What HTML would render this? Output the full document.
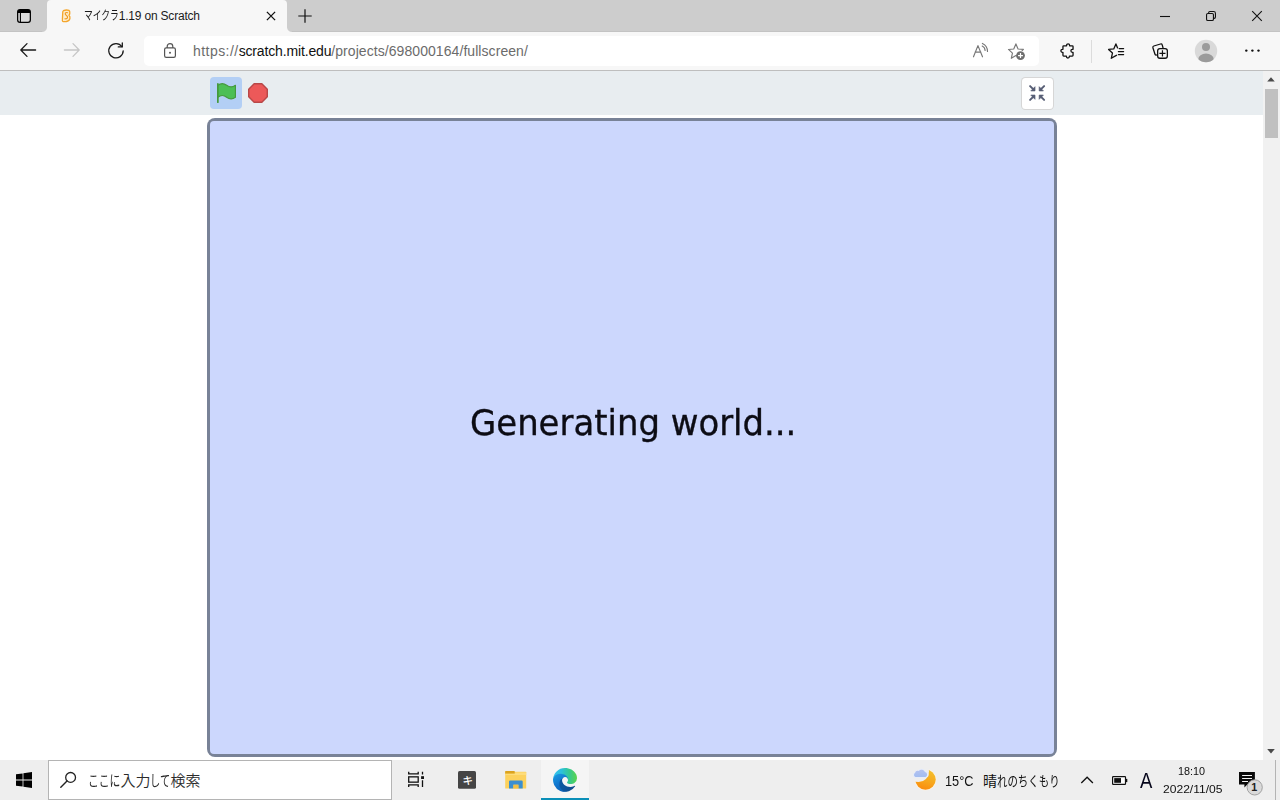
<!DOCTYPE html>
<html lang="ja">
<head>
<meta charset="utf-8">
<title>マイクラ1.19 on Scratch</title>
<style>
*{box-sizing:border-box;margin:0;padding:0}
html,body{width:1280px;height:800px;overflow:hidden;background:#fff}
body{position:relative;font-family:"Liberation Sans","Noto Sans CJK JP",sans-serif;color:#111}
.abs{position:absolute}
svg{position:absolute;overflow:visible}
/* ---------- browser frame ---------- */
#tabbar{position:absolute;left:0;top:0;width:1280px;height:32px;background:#cdcdcd;border-bottom:1px solid #c3c3c3}
#tab{position:absolute;left:47px;top:0;width:240px;height:32px;background:#f7f7f7;border-radius:4px 4px 0 0}
#tab:before,#tab:after{content:"";position:absolute;bottom:0;width:5px;height:5px;background:radial-gradient(circle at 0 0,#cdcdcd 4.5px,#f7f7f7 5.5px)}
#tab:before{left:-5px}
#tab:after{right:-5px;background:radial-gradient(circle at 100% 0,#cdcdcd 4.5px,#f7f7f7 5.5px)}
#tabtitle{position:absolute;left:84px;top:8px;font-size:12px;line-height:16px;white-space:nowrap;color:#1b1b1b;transform-origin:0 50%}
#toolbar{position:absolute;left:0;top:32px;width:1280px;height:38px;background:#f7f7f7}
#tbline{position:absolute;left:0;top:70px;width:1280px;height:1px;background:#bebebe}
#addr{position:absolute;left:144px;top:36px;width:895px;height:30px;background:#fff;border-radius:5px}
#url{position:absolute;left:193px;top:42px;font-size:14px;line-height:18px;white-space:nowrap;color:#6b6b6b;transform-origin:0 50%}
#url b{font-weight:normal;color:#111;letter-spacing:-.15px}
#u1{letter-spacing:.45px}
#u3{letter-spacing:.065px}
/* ---------- page ---------- */
#hdr{position:absolute;left:0;top:71px;width:1263px;height:44px;background:#e8edf0}
#flag{position:absolute;left:210px;top:77px;width:32px;height:32px;border-radius:4px;background:#b3cff5}
#unfs{position:absolute;left:1020.5px;top:76.5px;width:33px;height:33px;border-radius:4.5px;background:#fff;border:1px solid rgba(0,0,0,.16)}
#stage{position:absolute;left:207px;top:118px;width:850px;height:639px;border-radius:8px;background:#788297}
#stage i{position:absolute;left:3px;top:3px;right:3px;bottom:3px;border-radius:4px;background:#ccd7fd}
#gen{position:absolute;left:470px;top:398px;font-family:"DejaVu Sans","Liberation Sans",sans-serif;font-size:35.5px;line-height:50px;white-space:nowrap;color:#0c0c14;transform-origin:0 50%;transform:scaleX(.955);-webkit-text-stroke:.35px #0c0c14}
#sb{position:absolute;left:1263px;top:71px;width:17px;height:689px;background:#f1f1f1}
#thumb{position:absolute;left:1265px;top:89px;width:13px;height:49px;background:#c0c0c0}
/* ---------- taskbar ---------- */
#task{position:absolute;left:0;top:760px;width:1280px;height:40px;background:#eeeeee}
#search{position:absolute;left:48px;top:760px;width:344px;height:40px;background:#fff;border:1px solid #b4b4b4}
#stext .k{font-weight:400}
#stext{position:absolute;left:88px;font-weight:350;top:770px;font-size:15px;line-height:20px;white-space:nowrap;color:#2b2b2b;transform-origin:0 50%;font-family:"Noto Sans CJK JP","Liberation Sans",sans-serif}
#edgebg{position:absolute;left:541px;top:760px;width:48px;height:40px;background:#f5f5f5}
#edgeul{position:absolute;left:541px;top:798px;width:48px;height:2px;background:#0b8fb8}
.k{display:inline-block;transform-origin:0 50%}
.tt{position:absolute;white-space:nowrap;color:#111;transform-origin:0 50%}
</style>
</head>
<body>
<!-- browser chrome -->
<div id="tabbar"></div>
<div id="tab"></div>
<div id="tabtitle"><span class="k" style="transform:scaleX(.73);margin-right:-13px">マイクラ</span><span style="letter-spacing:-.2px">1.19 on Scratch</span></div>
<div id="toolbar"></div>
<div id="tbline"></div>
<div id="addr"></div>
<div id="url"><span id="u1">https://</span><b id="u2">scratch.mit.edu</b><span id="u3">/projects/698000164/fullscreen/</span></div>


<!-- tab actions icon -->
<svg style="left:17px;top:9px" width="14" height="14" viewBox="0 0 14 14"><rect x=".65" y=".65" width="12.7" height="12.7" rx="2.4" fill="#dbdbdb" stroke="#000" stroke-width="1.25"/><path d="M.65 3Q.65 .65 3 .65H11Q13.35 .65 13.35 3V3.9H.65Z" fill="#000"/><path d="M3.4 3.5V13" stroke="#000" stroke-width="1.1"/></svg>
<!-- favicon (Scratch S) -->
<svg style="left:61px;top:9px" width="11" height="14" viewBox="0 0 11 14"><path d="M2.4 1.7Q5.4 .5 7.9 1.4Q9 2.1 8.8 4.1Q8.7 5.5 8 6.3Q9.3 7.5 8.9 9.6Q8.4 12 5.4 12.5Q3.2 12.8 1.7 12.3Q1.2 11.8 1.4 10.4L1.8 2.8Q1.9 2 2.4 1.7Z" fill="#fdeccb" stroke="#f4a52a" stroke-width="1.3" stroke-linejoin="round"/><path d="M6.6 3.7Q5 3.1 4.3 4.1Q3.9 5.3 5.2 6.2Q6.9 7.2 6.5 8.8Q5.9 10.3 3.9 9.8" fill="none" stroke="#ee9a22" stroke-width="1.15" stroke-linecap="round"/></svg>
<!-- tab close -->
<svg style="left:265.7px;top:11.3px" width="10" height="10" viewBox="0 0 10 10"><path d="M.9 .9L9.1 9.1M9.1 .9L.9 9.1" stroke="#111" stroke-width="1.3" fill="none"/></svg>
<!-- new tab -->
<svg style="left:297.5px;top:8.5px" width="14" height="14" viewBox="0 0 14 14"><path d="M7 .3V13.7M.3 7H13.7" stroke="#111" stroke-width="1.2" fill="none"/></svg>
<!-- window controls -->
<svg style="left:1160px;top:11px" width="10" height="10" viewBox="0 0 10 10"><path d="M0 5.5H10" stroke="#111" stroke-width="1.1"/></svg>
<svg style="left:1206px;top:11px" width="10" height="10" viewBox="0 0 10 10"><rect x=".55" y="2.55" width="6.9" height="6.9" rx="1.3" fill="none" stroke="#111" stroke-width="1.1"/><path d="M2.6 2.4 V1.9 Q2.6 .55 3.9 .55 H7.6 Q9.45 .55 9.45 2.4 V6.1 Q9.45 7.4 8.1 7.4 H7.6" fill="none" stroke="#111" stroke-width="1.1"/></svg>
<svg style="left:1252px;top:11px" width="10" height="10" viewBox="0 0 10 10"><path d="M.2 .2L9.8 9.8M9.8 .2L.2 9.8" stroke="#111" stroke-width="1.1" fill="none"/></svg>
<!-- back / forward / reload -->
<svg style="left:20px;top:43px" width="16" height="14" viewBox="0 0 16 14"><path d="M7 .6L.8 7L7 13.4M.8 7H15.6" stroke="#1a1a1a" stroke-width="1.3" fill="none" stroke-linecap="round" stroke-linejoin="round"/></svg>
<svg style="left:64px;top:43px" width="16" height="14" viewBox="0 0 16 14"><path d="M9 .6L15.2 7L9 13.4M15.2 7H.4" stroke="#c6c6c6" stroke-width="1.3" fill="none" stroke-linecap="round" stroke-linejoin="round"/></svg>
<svg style="left:108px;top:42px" width="16" height="17" viewBox="0 0 16 17"><path d="M13.9 4.6A7.2 7.2 0 1 0 15.2 8.8" stroke="#1a1a1a" stroke-width="1.3" fill="none" stroke-linecap="round"/><path d="M14.3 .9V4.9H10.3" stroke="#1a1a1a" stroke-width="1.3" fill="none" stroke-linecap="round" stroke-linejoin="round"/></svg>
<!-- lock -->
<svg style="left:164px;top:43px" width="12" height="15" viewBox="0 0 12 15"><rect x=".6" y="4.9" width="10.8" height="9.5" rx="1.6" fill="none" stroke="#555" stroke-width="1.2"/><path d="M3.2 4.9V3.4a2.8 2.8 0 0 1 5.6 0V4.9" fill="none" stroke="#555" stroke-width="1.2"/><circle cx="6" cy="9.7" r="1" fill="#555"/></svg>
<!-- read aloud -->
<svg style="left:973px;top:43px" width="16" height="15" viewBox="0 0 16 15"><path d="M.5 13.8L4.95 2.6L9.5 13.8M2 9.1H7.9" stroke="#777" stroke-width="1.15" fill="none" stroke-linecap="round" stroke-linejoin="round"/><path d="M9.2 3A5.2 5.2 0 0 1 12.1 7.5M9.4 .4A8.8 8.8 0 0 1 14.5 8.5" stroke="#777" stroke-width="1.15" fill="none" stroke-linecap="round"/></svg>
<!-- add favourite -->
<svg style="left:1008px;top:43px" width="17" height="17" viewBox="0 0 17 17"><path d="M8.4 12.9L7.9 12.6L3.3 15.3L4.45 10.05L.5 6.45L5.75 5.95L7.9 .9L10.05 5.95L15.4 6.4L14.2 7.5" stroke="#787878" stroke-width="1.15" fill="none" stroke-linejoin="round" stroke-linecap="round"/><circle cx="12.5" cy="12.55" r="4.4" fill="#6f6f6f"/><path d="M12.5 10.1V15M10.05 12.55H14.95" stroke="#fff" stroke-width="1.2"/></svg>
<!-- extensions puzzle -->
<svg style="left:1060px;top:43px" width="15" height="16" viewBox="0 0 15 16"><path d="M3.7 2.8H6.6V2.3A1.5 1.5 0 0 1 9.6 2.3V2.8H12.3Q13.05 2.8 13.05 3.55V6.3H12.4A1.5 1.5 0 0 0 12.4 9.3H13.05V12.3Q13.05 13.05 12.3 13.05H9.4V13.5A1.5 1.5 0 0 1 6.4 13.5V13.05H3.7Q2.95 13.05 2.95 12.3V9.3H2.4A1.5 1.5 0 0 1 2.4 6.3H2.95V3.55Q2.95 2.8 3.7 2.8Z" stroke="#111" stroke-width="1.3" fill="none" stroke-linejoin="round"/></svg>
<div class="abs" style="left:1091px;top:40px;width:1px;height:23px;background:#dcdcdc"></div>
<!-- favourites -->
<svg style="left:1108px;top:43px" width="17" height="16" viewBox="0 0 17 16"><path d="M8.6 12.2L7.9 12.6L3.3 15.3L4.45 10.05L.6 6.45L5.75 5.95L7.9 .9L9.6 4.9" stroke="#111" stroke-width="1.3" fill="none" stroke-linejoin="round" stroke-linecap="round"/><path d="M11.2 5.5H15.6M10.4 8.5H15.6M10.4 11.5H15.6" stroke="#111" stroke-width="1.25" stroke-linecap="round"/></svg>
<!-- collections -->
<svg style="left:1152px;top:43px" width="17" height="16" viewBox="0 0 17 16"><path d="M4.7 12Q3.4 12.4 3 11.2L.9 4.7Q.5 3.4 1.8 3L8.5 1Q9.8 .6 10.2 1.9L11 4.7" stroke="#111" stroke-width="1.3" fill="none" stroke-linecap="round"/><rect x="5.65" y="5.55" width="9.7" height="9.7" rx="2.3" fill="none" stroke="#111" stroke-width="1.3"/><path d="M10.45 7.3V13.5M7.4 10.4H13.5" stroke="#111" stroke-width="1.2"/></svg>
<!-- profile -->
<svg style="left:1194px;top:39px" width="24" height="24" viewBox="0 0 24 24"><defs><clipPath id="pc"><circle cx="12" cy="12" r="11.2"/></clipPath></defs><circle cx="12" cy="12" r="11.2" fill="#d9d9d9"/><g clip-path="url(#pc)" fill="#9b9b9b"><circle cx="12" cy="8" r="4"/><ellipse cx="12" cy="20.2" rx="7.7" ry="5.6"/></g></svg>
<!-- menu dots -->
<svg style="left:1244px;top:48px" width="17" height="5" viewBox="0 0 17 5"><circle cx="2.3" cy="2.6" r="1.2" fill="#111"/><circle cx="8.4" cy="2.6" r="1.2" fill="#111"/><circle cx="14.5" cy="2.6" r="1.2" fill="#111"/></svg>

<!-- page -->
<div id="hdr"></div>
<div id="flag"></div>
<div id="unfs"></div>
<div id="stage"><i></i></div>
<div id="gen">Generating world...</div>
<div id="sb"></div>
<div id="thumb"></div>


<!-- green flag -->
<svg style="left:216.5px;top:83px" width="19" height="20" viewBox="0 0 16.63 17.5"><path d="M.75,2A6.44,6.44,0,0,1,8.44,2h0a6.44,6.44,0,0,0,7.69,0V12.4a6.44,6.44,0,0,1-7.69,0h0a6.44,6.44,0,0,0-7.69,0" fill="#4cbf56" stroke="#45993d" stroke-linecap="round" stroke-linejoin="round"/><path d="M.75 16.75V.75" stroke="#45993d" stroke-width="1.5" stroke-linecap="round" fill="none"/></svg>
<!-- stop -->
<svg style="left:248px;top:83px" width="20" height="20" viewBox="0 0 14 14"><polygon points="4.3 .5 9.7 .5 13.5 4.3 13.5 9.7 9.7 13.5 4.3 13.5 .5 9.7 .5 4.3" fill="#ec5959" stroke="#b84848" stroke-linecap="round" stroke-linejoin="round"/></svg>
<!-- unfullscreen arrows -->
<svg style="left:1029px;top:85px" width="16" height="16" viewBox="0 0 16 16"><g fill="#575e75" stroke="#575e75"><g><path d="M6 1.7V5.9H1.8Z" stroke-width=".7" stroke-linejoin="round"/><path d="M1.1 1.1L4.4 4.4" stroke-width="2" stroke-linecap="round"/></g><g transform="translate(16.2,0) scale(-1,1)"><path d="M6 1.7V5.9H1.8Z" stroke-width=".7" stroke-linejoin="round"/><path d="M1.1 1.1L4.4 4.4" stroke-width="2" stroke-linecap="round"/></g><g transform="translate(0,16) scale(1,-1)"><path d="M6 1.7V5.9H1.8Z" stroke-width=".7" stroke-linejoin="round"/><path d="M1.1 1.1L4.4 4.4" stroke-width="2" stroke-linecap="round"/></g><g transform="translate(16.2,16) scale(-1,-1)"><path d="M6 1.7V5.9H1.8Z" stroke-width=".7" stroke-linejoin="round"/><path d="M1.1 1.1L4.4 4.4" stroke-width="2" stroke-linecap="round"/></g></g></svg>
<!-- scrollbar arrows -->
<svg style="left:1267.4px;top:77.4px" width="8" height="4.6" viewBox="0 0 8 4.6"><path d="M4 .2L7.8 4.5H.2Z" fill="#4a4a4a"/></svg>
<svg style="left:1267.4px;top:748.6px" width="8" height="4.6" viewBox="0 0 8 4.6"><path d="M4 4.4L7.8 .1H.2Z" fill="#4a4a4a"/></svg>

<!-- taskbar -->
<div id="task"></div>
<div id="search"></div>
<div id="stext"><span class="k" style="transform:scaleX(.72);margin-right:-12.6px">ここに</span>入力<span class="k" style="transform:scaleX(.68);margin-right:-9.6px">して</span>検索</div>
<div id="edgebg"></div>
<div id="edgeul"></div>

<!-- start -->
<svg style="left:16px;top:772px" width="16" height="16" viewBox="0 0 16 16"><path d="M0 2.3L6.6 1.4V7.6H0ZM7.4 1.3L16 0V7.6H7.4ZM0 8.4H6.6V14.6L0 13.7ZM7.4 8.4H16V16L7.4 14.7Z" fill="#000"/></svg>
<!-- search glass -->
<svg style="left:60px;top:771px" width="17" height="17" viewBox="0 0 17 17"><circle cx="10.6" cy="6.4" r="4.9" fill="none" stroke="#222" stroke-width="1.3"/><path d="M7 10L.8 16.2" stroke="#222" stroke-width="1.4" stroke-linecap="round"/></svg>
<!-- task view -->
<svg style="left:407px;top:771px" width="18" height="17" viewBox="0 0 18 17"><g fill="none" stroke="#111" stroke-width="1.3"><path d="M1.7 .8V2.9H11.2V.8"/><rect x="1.7" y="5.85" width="9.5" height="5.3"/><path d="M1.7 16.1V13.8H11.2V16.1"/><path d="M15.5 .8V3.4M15.5 9.3V16.1"/></g><rect x="14.1" y="5.2" width="2.9" height="2.8" fill="#111"/></svg>
<!-- kana app icon -->
<svg style="left:458px;top:771px" width="18" height="18" viewBox="0 0 18 18"><rect width="18" height="17.8" rx="1.6" fill="#454545"/><text x="9.7" y="12.6" font-family="'Noto Sans CJK JP',sans-serif" font-size="10.5" font-weight="500" fill="#fff" text-anchor="middle">キ</text></svg>
<!-- explorer -->
<svg style="left:505px;top:771px" width="22" height="18" viewBox="0 0 22 18"><rect x=".2" y=".8" width="21" height="16.8" rx=".5" fill="#fcd15c"/><path d="M.2 .5Q.2 0 .7 0H9.2Q9.7 0 9.7 .5V2.7H.2Z" fill="#dba31f"/><path d="M.2 2.7H9.7L10.6 1.6H21.2V4H.2Z" fill="#fddc7a"/><path d="M4 17.6V10.6Q4 9.4 5.2 9.4H16.5Q17.7 9.4 17.7 10.6V17.6H13.4V13.7H8.4V17.6Z" fill="#3a8fd0"/><rect x="8.4" y="13.7" width="5" height="3.9" fill="#f0bf45"/></svg>
<!-- edge -->
<svg style="left:553px;top:768px" width="24" height="24" viewBox="0 0 256 256"><defs>
<linearGradient id="ea" x1="63" y1="178" x2="241" y2="178" gradientUnits="userSpaceOnUse"><stop offset="0" stop-color="#0c59a4"/><stop offset="1" stop-color="#114a8b"/></linearGradient>
<linearGradient id="eb" x1="10" y1="60" x2="130" y2="250" gradientUnits="userSpaceOnUse"><stop offset="0" stop-color="#1b9de2"/><stop offset=".5" stop-color="#1177d0"/><stop offset="1" stop-color="#0c5cb0"/></linearGradient>
<linearGradient id="ec" x1="0" y1="90" x2="256" y2="90" gradientUnits="userSpaceOnUse"><stop offset="0" stop-color="#35c1f1"/><stop offset=".35" stop-color="#2cc0dc"/><stop offset=".7" stop-color="#36c98a"/><stop offset="1" stop-color="#5bd44c"/></linearGradient></defs>
<path fill="url(#ea)" d="M231 190.500c-3.400 1.800-6.900 3.400-10.500 4.700a101.500 101.500 0 0 1-35.800 6.400c-47.100 0-88.200-32.400-88.200-74.100a31.400 31.400 0 0 1 16.400-27.200c-42.600 1.800-53.600 46.200-53.600 72.200c0 73.600 67.800 81 82.400 81c7.900 0 19.800-2.300 26.900-4.600l1.300-.400a128 128 0 0 0 66.400-52.700a4 4 0 0 0-5.300-5.300z"/>
<path fill="url(#eb)" d="M105.700 241.400a79.200 79.200 0 0 1-22.700-21.300a80.700 80.700 0 0 1 29.500-120c3.100-1.500 8.400-4.100 15.500-4a32.300 32.300 0 0 1 25.700 13a31.900 31.900 0 0 1 6.300 18.700c0-.200 24.500-79.600-80-79.600c-43.900 0-80 41.600-80 78.200a130.200 130.200 0 0 0 12.100 56a128 128 0 0 0 156.400 67a75.500 75.500 0 0 1-62.800-8z"/>
<path fill="url(#ec)" d="M152.300 148.900c-.800 1-3.300 2.500-3.300 5.700c0 2.600 1.700 5.100 4.700 7.200c14.400 10 41.500 8.700 41.600 8.700a59.600 59.600 0 0 0 30.300-8.400a61.400 61.400 0 0 0 30.400-52.900c.300-22.400-8-37.300-11.300-43.900c-21.200-41.500-67-65.300-116.700-65.300a128 128 0 0 0-128 126.200c.5-36.500 36.800-66 80-66c3.500 0 23.500.3 42 10.100c16.300 8.600 24.900 18.900 30.800 29.200c6.200 10.700 7.300 24.100 7.300 29.500s-2.700 13.300-7.800 19.900z"/>
</svg>
<!-- weather: moon + cloud -->
<svg style="left:912px;top:767px" width="25" height="24" viewBox="0 0 25 24"><defs><linearGradient id="mg" x1=".6" y1="0" x2=".3" y2="1"><stop offset="0" stop-color="#f3bf2c"/><stop offset=".55" stop-color="#f7a61c"/><stop offset="1" stop-color="#fb8a0c"/></linearGradient><linearGradient id="cg" x1="0" y1="0" x2="0" y2="1"><stop offset="0" stop-color="#b4c2f0"/><stop offset="1" stop-color="#a3bdf0"/></linearGradient><mask id="mm"><rect width="25" height="24" fill="#fff"/><circle cx="6.6" cy="4.6" r="10.4" fill="#000"/></mask></defs>
<circle cx="13.5" cy="12.6" r="10.9" fill="#fbf3e4" mask="url(#mm)"/>
<circle cx="13.5" cy="12.6" r="10.2" fill="url(#mg)" mask="url(#mm)"/>
<g transform="translate(-.6,-.6) scale(1.12)"><path d="M3.2 10.1A2.4 2.4 0 0 1 2.6 5.6A3.2 3.2 0 0 1 6.2 3.4A3.9 3.9 0 0 1 12.6 4.4A2.9 2.9 0 0 1 13.2 10.1Z" fill="#e6ecfa"/>
<path d="M3.6 9.4A1.9 1.9 0 0 1 3.2 6A2.8 2.8 0 0 1 6.6 4A3.3 3.3 0 0 1 12.1 5A2.3 2.3 0 0 1 12.6 9.4Z" fill="url(#cg)"/></g></svg>
<!-- chevron -->
<svg style="left:1080px;top:776px" width="14" height="8" viewBox="0 0 14 8"><path d="M1.3 7L7.1 1.2L12.9 7" stroke="#111" stroke-width="1.3" fill="none"/></svg>
<!-- battery -->
<svg style="left:1112px;top:776px" width="16" height="9" viewBox="0 0 16 9"><rect x=".6" y=".6" width="12.9" height="7.8" rx=".6" fill="#fff" stroke="#111" stroke-width="1.2"/><rect x="2.2" y="2.1" width="6.8" height="4.7" fill="#111"/><rect x="14" y="2.9" width="1.3" height="3.2" fill="#111"/></svg>
<!-- notifications -->
<svg style="left:1239px;top:771px" width="26" height="26" viewBox="0 0 26 26"><path d="M0 1H15.9V13.5H8.4L5.4 16.4V13.5H0Z" fill="#0a0a0a"/><path d="M3.1 4.5H13M3.1 7.5H13M3.1 10.5H9" stroke="#f4f4f4" stroke-width="1.1"/><circle cx="15.7" cy="16.4" r="7.6" fill="#dadada" stroke="#9a9a9a" stroke-width=".9"/><text x="15.3" y="19.9" font-family="'Liberation Sans',sans-serif" font-size="10.8" font-weight="700" fill="#222" text-anchor="middle">1</text></svg>
<div class="abs" style="left:1275px;top:760px;width:1px;height:40px;background:#b4b4b4"></div>

<div class="tt" id="temp" style="left:945px;top:771px;font-size:14px;line-height:20px;transform:scaleX(.91)">15°C</div>
<div class="tt" id="wx" style="left:983px;top:769.5px;font-size:14px;line-height:20px;font-family:'Noto Sans CJK JP',sans-serif">晴<span class="k" style="transform:scaleX(.745);margin-right:-21.4px">れのちくもり</span></div>
<div class="tt" id="ime" style="left:1139.6px;top:769.4px;font-size:21.5px;line-height:24px;color:#05051a;transform:scaleX(.86)">A</div>
<div class="tt" id="time" style="left:1178px;top:763px;font-size:11.5px;line-height:16px;transform:scaleX(.94)">18:10</div>
<div class="tt" id="date" style="left:1163px;top:781px;font-size:11.5px;line-height:16px;transform:scaleX(1.05)">2022/11/05</div>
</body>
</html>
